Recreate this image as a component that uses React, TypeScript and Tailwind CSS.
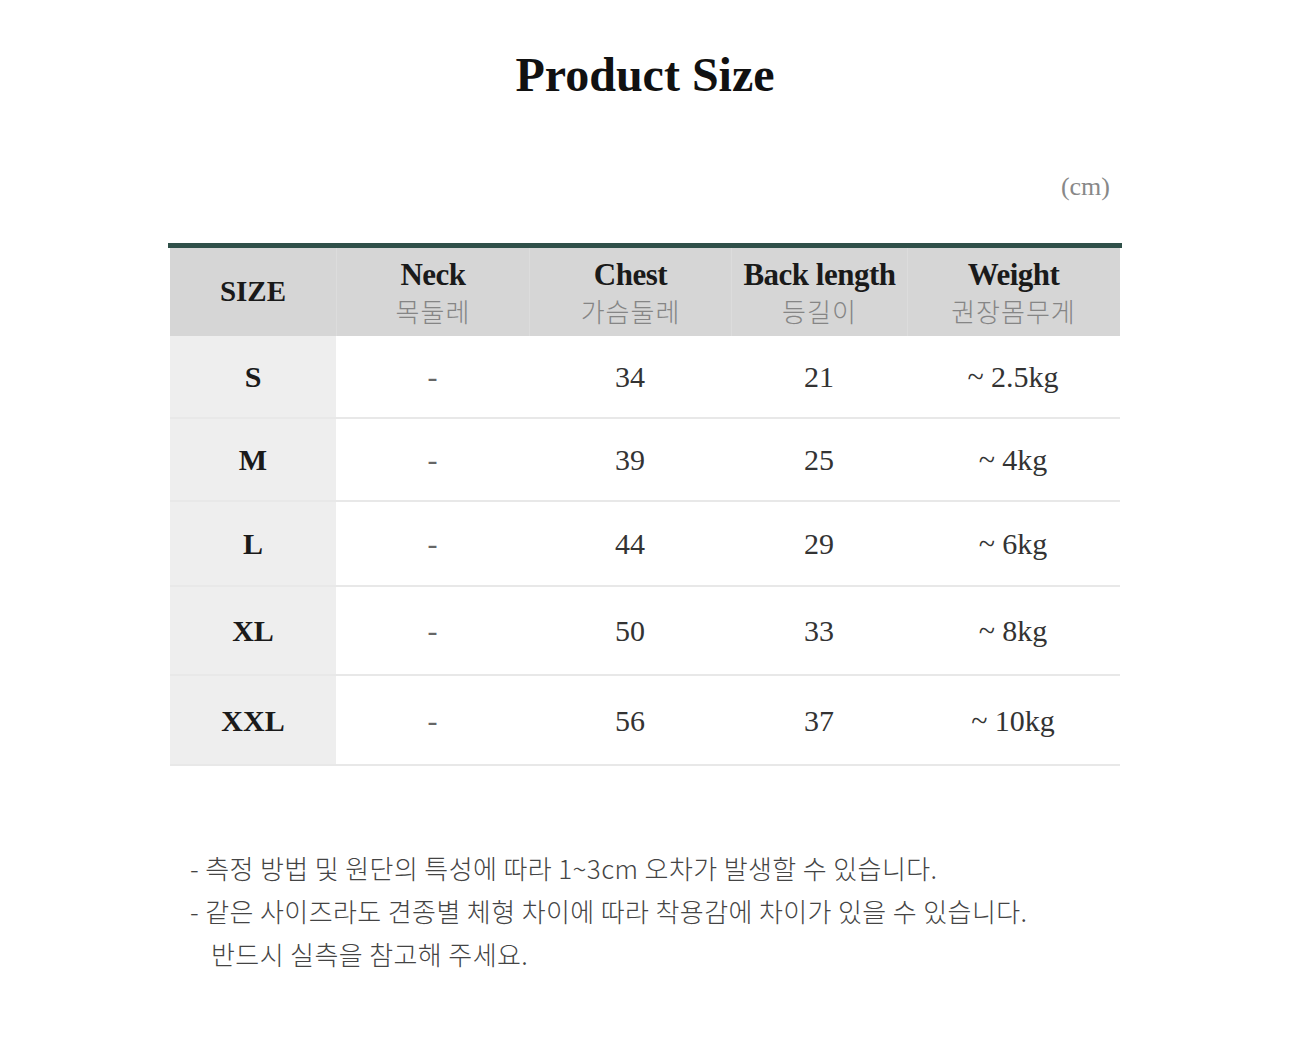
const rows = [
  { size: "S", neck: "-", chest: "34", back: "21", weight: "~ 2.5kg", h: "h-[83px]" },
  { size: "M", neck: "-", chest: "39", back: "25", weight: "~ 4kg", h: "h-[83px]" },
  { size: "L", neck: "-", chest: "44", back: "29", weight: "~ 6kg", h: "h-[85px]" },
  { size: "XL", neck: "-", chest: "50", back: "33", weight: "~ 8kg", h: "h-[89px]" },
  { size: "XXL", neck: "-", chest: "56", back: "37", weight: "~ 10kg", h: "h-[90px]" },
]

const serif = "font-['Liberation_Serif',serif]"
const kr = "font-['Noto_Sans_CJK_KR','Noto_Sans',sans-serif]"
const cols = "grid grid-cols-[166px_193px_202px_176px_212px]"

function Head({ en, ko }: { en: string; ko: string }) {
  return (
    <div className="flex flex-col items-center justify-center border-l border-[#dcdcdc]">
      <span className={`${serif} text-[31px] leading-[38px] font-bold tracking-[-0.5px] text-[#1a1a1a]`}>{en}</span>
      <span className={`${kr} text-[26px] leading-[34px] font-light tracking-[1px] text-[#858585]`}>{ko}</span>
    </div>
  )
}

export default function App() {
  return (
    <div className="w-[1290px] min-h-[1041px] bg-white">
      <h1 className={`${serif} pt-[46px] text-center text-[48px] leading-[58px] font-bold text-[#111]`}>
        Product Size
      </h1>

      <div className="mx-auto w-[954px]">
        <p className={`${serif} mt-[68px] pr-[12px] text-right text-[26px] leading-[30px] text-[#888]`}>(cm)</p>

        <div className="mt-[41px] h-[5px] bg-[#2f5049]" />
        <div className="px-[2px]">
          <div className={`${cols} h-[88px] bg-[#d6d6d6]`}>
            <div className="flex items-center justify-center">
              <span className={`${serif} text-[29px] font-bold text-[#1a1a1a]`}>SIZE</span>
            </div>
            <Head en="Neck" ko="목둘레" />
            <Head en="Chest" ko="가슴둘레" />
            <Head en="Back length" ko="등길이" />
            <Head en="Weight" ko="권장몸무게" />
          </div>

          {rows.map((r) => (
            <div key={r.size} className={`${cols} ${r.h} border-b-2 border-[#e8e8e8] ${serif} text-[30px] text-[#333]`}>
              <div className="flex items-center justify-center bg-[#eeeeee] font-bold text-[#1a1a1a]">{r.size}</div>
              <div className="flex items-center justify-center text-[#666]">{r.neck}</div>
              <div className="flex items-center justify-center">{r.chest}</div>
              <div className="flex items-center justify-center">{r.back}</div>
              <div className="flex items-center justify-center">{r.weight}</div>
            </div>
          ))}
        </div>
      </div>

      <div className={`${kr} ml-[190px] mt-[80px] text-[26px] leading-[43px] font-light tracking-[0.4px] text-[#444]`}>
        <p>- 측정 방법 및 원단의 특성에 따라 1~3cm 오차가 발생할 수 있습니다.</p>
        <p>- 같은 사이즈라도 견종별 체형 차이에 따라 착용감에 차이가 있을 수 있습니다.</p>
        <p className="pl-[21px]">반드시 실측을 참고해 주세요.</p>
      </div>
    </div>
  )
}
